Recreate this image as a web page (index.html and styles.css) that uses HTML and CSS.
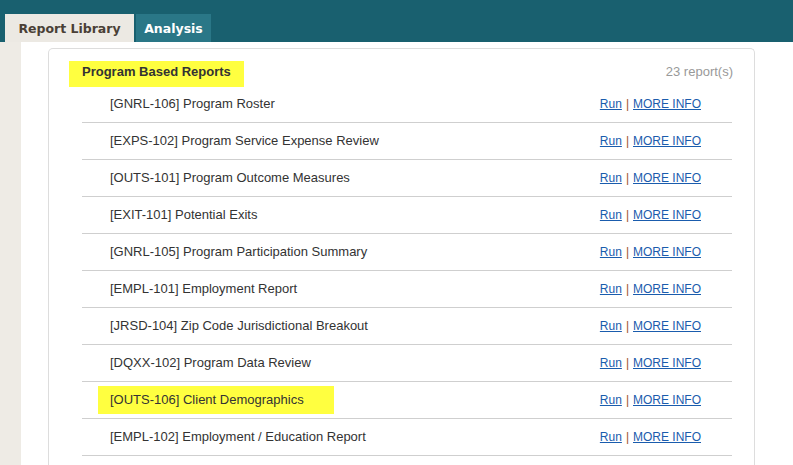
FILE: index.html
```html
<!DOCTYPE html>
<html>
<head>
<meta charset="utf-8">
<link rel="stylesheet" href="styles.css">
</head>
<body>
<header class="topbar">
  <div class="tab tab-active">Report Library</div>
  <div class="tab tab-other">Analysis</div>
</header>
<div class="layout">
  <aside class="sidebar"></aside>
  <main class="main">
    <section class="card">
      <div class="card-head">
        <span class="group-title">Program Based Reports</span>
        <span class="count">23 report(s)</span>
      </div>
      <ul class="reports">
        <li class="row"><span class="name">[GNRL-106] Program Roster</span><span class="actions"><a href="#">Run</a><span class="sep">|</span><a href="#">MORE INFO</a></span></li>
        <li class="row"><span class="name">[EXPS-102] Program Service Expense Review</span><span class="actions"><a href="#">Run</a><span class="sep">|</span><a href="#">MORE INFO</a></span></li>
        <li class="row"><span class="name">[OUTS-101] Program Outcome Measures</span><span class="actions"><a href="#">Run</a><span class="sep">|</span><a href="#">MORE INFO</a></span></li>
        <li class="row"><span class="name">[EXIT-101] Potential Exits</span><span class="actions"><a href="#">Run</a><span class="sep">|</span><a href="#">MORE INFO</a></span></li>
        <li class="row"><span class="name">[GNRL-105] Program Participation Summary</span><span class="actions"><a href="#">Run</a><span class="sep">|</span><a href="#">MORE INFO</a></span></li>
        <li class="row"><span class="name">[EMPL-101] Employment Report</span><span class="actions"><a href="#">Run</a><span class="sep">|</span><a href="#">MORE INFO</a></span></li>
        <li class="row"><span class="name">[JRSD-104] Zip Code Jurisdictional Breakout</span><span class="actions"><a href="#">Run</a><span class="sep">|</span><a href="#">MORE INFO</a></span></li>
        <li class="row"><span class="name">[DQXX-102] Program Data Review</span><span class="actions"><a href="#">Run</a><span class="sep">|</span><a href="#">MORE INFO</a></span></li>
        <li class="row"><span class="name name-hl">[OUTS-106] Client Demographics</span><span class="actions"><a href="#">Run</a><span class="sep">|</span><a href="#">MORE INFO</a></span></li>
        <li class="row"><span class="name">[EMPL-102] Employment / Education Report</span><span class="actions"><a href="#">Run</a><span class="sep">|</span><a href="#">MORE INFO</a></span></li>
      </ul>
    </section>
  </main>
</div>
</body>
</html>
```
FILE: styles.css
```css
* { box-sizing: border-box; }
html, body { margin: 0; padding: 0; }
body {
  font-family: "Liberation Sans", Arial, sans-serif;
  font-size: 13px;
  color: #333;
  background: #fff;
  height: 465px;
  overflow: hidden;
}
.topbar {
  height: 42px;
  background: #19606f;
  display: flex;
  align-items: flex-end;
  padding-left: 5px;
  gap: 2px;
}
.tab {
  height: 28px;
  line-height: 29px;
  font-family: "DejaVu Sans", Verdana, sans-serif;
  font-weight: bold;
  font-size: 12.5px;
  text-align: center;
}
.tab-active {
  width: 129px;
  background: #ece9e3;
  color: #4a3f36;
}
.tab-other {
  width: 75px;
  background: #2a7787;
  color: #fff;
}
.layout {
  display: flex;
  height: 423px;
}
.sidebar {
  width: 21px;
  background: #eeebe5;
  flex: none;
}
.main {
  flex: 1;
  padding: 6px 0 0 27px;
}
.card {
  width: 707px;
  height: 100%;
  border: 1px solid #dddddd;
  border-bottom: none;
  border-radius: 5px 5px 0 0;
  padding: 0 21px 0 20px;
}
.card-head {
  display: flex;
  justify-content: space-between;
  align-items: flex-start;
  padding-top: 12px;
  height: 37px;
}
.group-title {
  background: #ffff40;
  font-weight: bold;
  font-size: 13px;
  color: #333;
  height: 26px;
  line-height: 22px;
  padding: 0 13px;
}
.count {
  color: #999;
  line-height: 22px;
  font-size: 13px;
}
.reports {
  list-style: none;
  margin: 0 0 0 13px;
  padding: 0;
  width: 650px;
}
.row {
  height: 37px;
  border-bottom: 1px solid #cfcfcf;
  display: flex;
  align-items: center;
  justify-content: space-between;
  padding: 0 31px 2px 28px;
}
.name { color: #333; }
.name-hl {
  background: #ffff40;
  height: 28px;
  line-height: 28px;
  padding: 0 30px 0 12px;
  margin-left: -12px;
  margin-top: 2px;
}
.actions {
  color: #a0522d;
  font-size: 12px;
  margin-top: 2px;
}
.actions a {
  color: #1a5cad;
  text-decoration: underline;
}
.sep { margin: 0 4px; }
```
